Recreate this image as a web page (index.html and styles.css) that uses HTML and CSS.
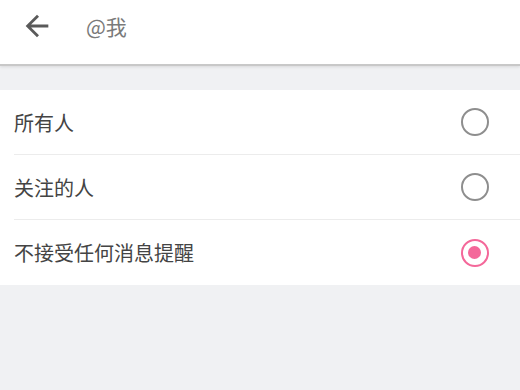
FILE: index.html
```html
<!DOCTYPE html>
<html lang="zh-CN">
<head>
  <meta charset="UTF-8" />
  <title>@我</title>
  <link rel="stylesheet" href="styles.css">
</head>
<body>

  <div class="topbar">
    <button class="back" aria-label="返回">
      <svg width="34" height="34" viewBox="0 0 24 24"><path d="M20 11H7.83l5.59-5.59L12 4l-8 8 8 8 1.41-1.41L7.83 13H20v-2z" fill="currentColor"/></svg>
    </button>
    <div class="title">@我</div>
  </div>

  <div class="list">
    <label class="row">
      <span class="label">所有人</span>
      <span class="radio"></span>
    </label>
    <label class="row">
      <span class="label">关注的人</span>
      <span class="radio"></span>
    </label>
    <label class="row">
      <span class="label">不接受任何消息提醒</span>
      <span class="radio checked"></span>
    </label>
  </div>

</body>
</html>
```

FILE: styles.css
```css
* {
  margin: 0;
  padding: 0;
  box-sizing: border-box;
}
html, body {
  width: 100%;
  height: 100%;
  background-color: #f0f1f3;
  font-family: "Noto Sans CJK SC", "Noto Sans", sans-serif;
  overflow: hidden;
  color: #333;
}
.topbar {
  height: 66px;
  background: #fff;
  display: flex;
  align-items: center;
  border-bottom: 2px solid #c8c8c8;
  box-shadow: 0 1px 3px rgba(0, 0, 0, 0.1);
}
.back {
  width: 34px;
  height: 34px;
  margin-left: 20px;
  margin-top: -13px;
  border: none;
  background: none;
  color: #5a5a5a;
  display: flex;
}
.title {
  margin-left: 32px;
  margin-top: -13px;
  font-size: 21px;
  color: #7a7a7a;
}
.list {
  margin-top: 24px;
  background: #fff;
  padding-left: 14px;
}
.row {
  height: 65px;
  display: flex;
  align-items: center;
  justify-content: space-between;
  padding-right: 31px;
  border-bottom: 1px solid #ececec;
}
.row:last-child {
  border-bottom: none;
}
.label {
  font-size: 20px;
  color: #444;
}
.radio {
  width: 28px;
  height: 28px;
  border-radius: 50%;
  border: 2.5px solid #8e8e8e;
}
.radio.checked {
  border-color: #f4689a;
  position: relative;
}
.radio.checked::after {
  content: "";
  position: absolute;
  top: 5px;
  left: 5px;
  width: 13px;
  height: 13px;
  border-radius: 50%;
  background: #f4689a;
}
```
